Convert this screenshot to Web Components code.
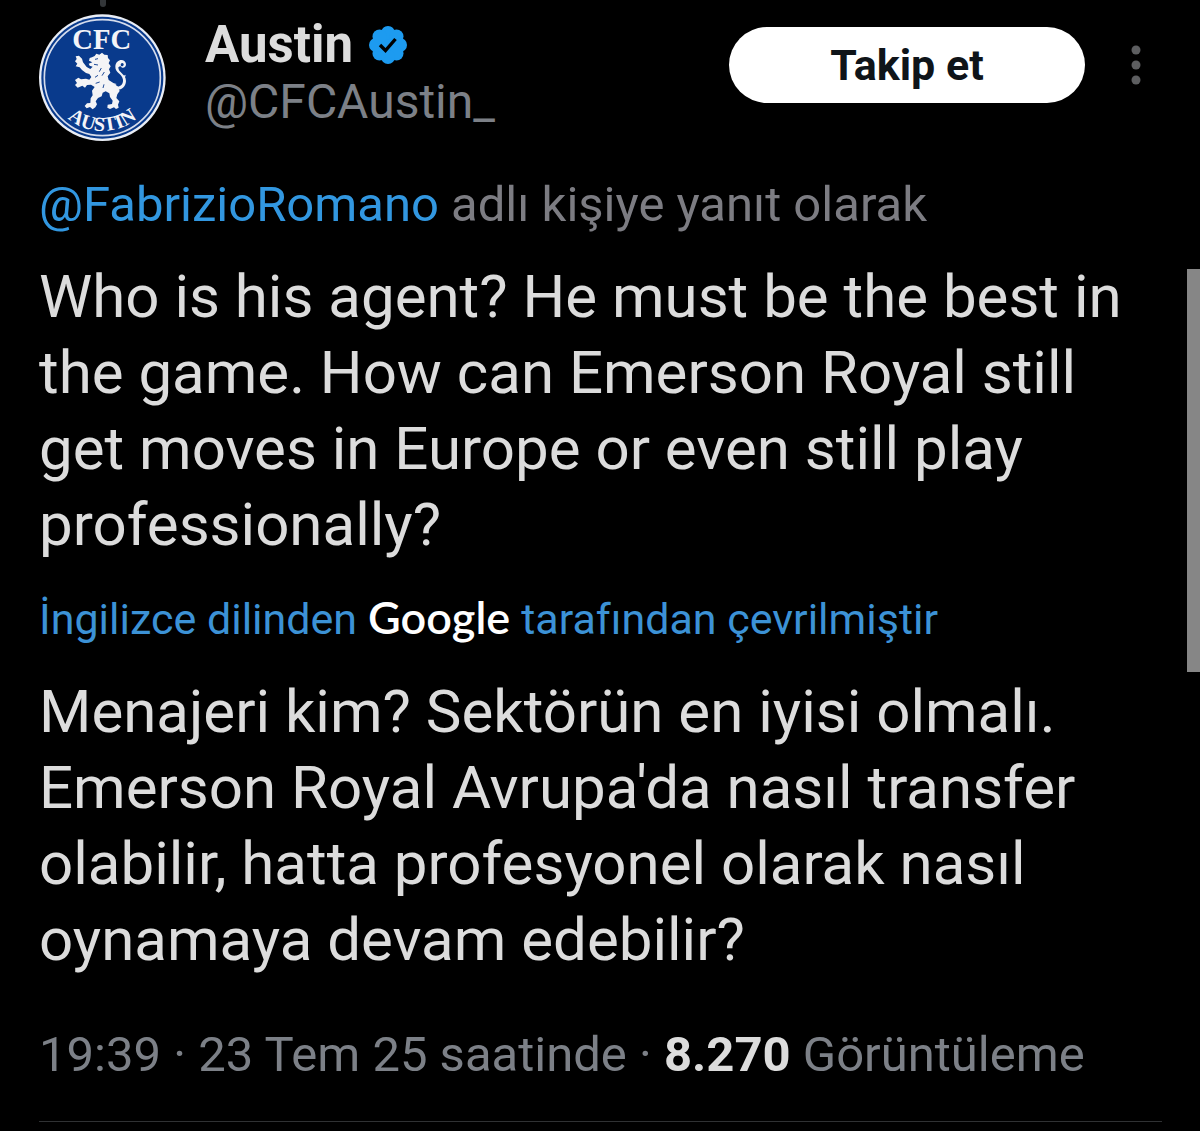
<!DOCTYPE html>
<html lang="tr">
<head>
<meta charset="utf-8">
<meta name="viewport" content="width=device-width, initial-scale=1">
<title>Austin (@CFCAustin_)</title>
<style>
  body {
    margin: 0;
    background: #000;
    color: #dcdcdc;
    font-family: Roboto, "Liberation Sans", sans-serif;
  }
</style>
</head>
<body>
<post-view>
  <post-header slot="header" name="Austin" handle="@CFCAustin_"></post-header>
  <reply-line slot="reply" user="@FabrizioRomano">adlı kişiye yanıt olarak</reply-line>
  <post-text lang="en">Who is his agent? He must be the best in the game. How can Emerson Royal still get moves in Europe or even still play professionally?</post-text>
  <translate-note></translate-note>
  <post-text>Menajeri kim? Sektörün en iyisi olmalı. Emerson Royal Avrupa'da nasıl transfer olabilir, hatta profesyonel olarak nasıl oynamaya devam edebilir?</post-text>
  <post-meta slot="meta" time="19:39" date="23 Tem 25 saatinde" views="8.270"></post-meta>
</post-view>
<scroll-thumb></scroll-thumb>

<script>
class PostElement extends HTMLElement {
  constructor() {
    super();
    this.attachShadow({ mode: "open" });
  }

  connectedCallback() {
    this.shadowRoot.innerHTML = `<style>${this.styles}</style>${this.markup}`;
  }
}

class PostView extends PostElement {
  get styles() {
    return `
      :host { display: block; }
      article {
        display: flex;
        flex-direction: column;
        padding: 0 38px 0 39px;
      }
      .content {
        display: flex;
        flex-direction: column;
        gap: 26px;
        padding: 26px 0 48px;
      }
    `;
  }

  get markup() {
    return `
      <article>
        <slot name="header"></slot>
        <slot name="reply"></slot>
        <div class="content"><slot></slot></div>
        <slot name="meta"></slot>
      </article>
    `;
  }
}

class UserAvatar extends PostElement {
  get styles() {
    return `
      :host {
        display: flex;
        flex-direction: column;
        align-items: center;
        gap: 7px;
      }
      .thread {
        width: 6px;
        height: 7px;
        border-radius: 0 0 3px 3px;
        background: #333639;
      }
      svg { display: block; width: 128px; height: 128px; }
      text {
        font-family: "Liberation Serif", serif;
        font-weight: 700;
        fill: #f3f4f8;
      }
    `;
  }

  get markup() {
    return `
      <div class="thread"></div>
      <svg viewBox="58 42 384 384" role="img" aria-label="CFC Austin">
        <circle cx="248" cy="233" r="190" fill="#e9edf5"/>
        <circle cx="248" cy="233" r="183" fill="#093a8c"/>
        <circle cx="248" cy="233" r="174" fill="none" stroke="#d5dcec" stroke-width="5"/>
        <text x="246" y="148" font-size="86" text-anchor="middle">CFC</text>
        <path id="arc" d="M88 233A160 160 0 0 0 408 233" fill="none"/>
        <text font-size="60" text-anchor="middle">
          <textPath href="#arc" startOffset="50%">AUSTIN</textPath>
        </text>
        <g fill="#f4f4f6">
          <path d="M217 172L225 168L230 161L239 164L247 158L254 164L264 165L265 174L271 181L267 190L273 199L268 208L272 218L264 229L267 240L281 249L295 260L300 273L293 283L290 294L299 304L295 314L297 323L289 327L283 322L271 327L263 323L264 314L277 312L279 302L271 291L269 280L258 274L249 278L246 289L235 294L228 304L232 313L227 322L219 328L211 321L201 325L195 318L202 310L212 309L213 295L219 286L217 272L225 261L214 254L202 255L196 263L188 257L174 263L166 255L172 249L166 240L176 233L184 238L199 236L209 239L215 231L209 222L199 219L187 210L180 202L168 199L173 191L166 184L171 177L168 169L178 167L187 176L190 187L201 201L212 207L219 200L210 197L207 191L218 187L208 182L210 174Z"/>
          <path d="M278 250C290 267 312 259 310 239C308 220 286 219 287 200C288 177 316 174 319 192C320 203 307 208 302 198L296 202C295 218 319 222 319 243C318 269 290 277 276 261Z"/>
          <path d="M309 229L318 224L315 237ZM286 255L279 249L291 252Z"/>
        </g>
        <path d="M304 198C300 190 309 185 312 192C313 197 307 201 304 198Z" fill="#093a8c"/>
        <g fill="none" stroke="#204b98" stroke-width="3">
          <path d="M226 178L235 176M223 193L235 195M245 204L239 215M254 216L247 227M235 226L226 232M228 250L240 246M253 253L250 264"/>
        </g>
      </svg>
    `;
  }
}

class VerifiedBadge extends PostElement {
  get styles() {
    return `
      :host { display: block; }
      svg { display: block; width: 38px; height: 38px; }
    `;
  }

  get markup() {
    return `
      <svg viewBox="0 0 38 38" role="img" aria-label="Onaylı hesap">
        <g fill="#1d9bf0">
          <circle cx="19" cy="19" r="15"/>
          <circle cx="19" cy="7" r="7"/>
          <circle cx="27.5" cy="10.5" r="7"/>
          <circle cx="31" cy="19" r="7"/>
          <circle cx="27.5" cy="27.5" r="7"/>
          <circle cx="19" cy="31" r="7"/>
          <circle cx="10.5" cy="27.5" r="7"/>
          <circle cx="7" cy="19" r="7"/>
          <circle cx="10.5" cy="10.5" r="7"/>
        </g>
        <path d="M11 19L16.5 24.5L26.5 13" fill="none" stroke="#000" stroke-width="3.4"/>
      </svg>
    `;
  }
}

class PostHeader extends PostElement {
  get styles() {
    return `
      :host { display: flex; align-items: flex-start; }
      .who {
        flex: 1;
        margin-left: 38px;
        padding-top: 16px;
        font-size: 48px;
        line-height: 57px;
      }
      .name {
        display: flex;
        align-items: center;
        gap: 16px;
        font-size: 51px;
        font-weight: 700;
      }
      .handle { color: #7c8087; }
      a { color: inherit; text-decoration: none; }
      .actions {
        display: flex;
        align-items: center;
        gap: 41px;
        padding-top: 27px;
      }
      button {
        border: 0;
        padding: 0;
        font: inherit;
        cursor: pointer;
      }
      .follow {
        width: 356px;
        height: 76px;
        border-radius: 38px;
        background: #fff;
        color: #0f1419;
        font-size: 43px;
        font-weight: 700;
      }
      .more { margin-right: 16px; background: none; }
      .more svg { display: block; width: 20px; height: 40px; }
    `;
  }

  get markup() {
    return `
      <user-avatar></user-avatar>
      <div class="who">
        <div class="name"><a href="#">${this.getAttribute("name")}</a><verified-badge></verified-badge></div>
        <a class="handle" href="#">${this.getAttribute("handle")}</a>
      </div>
      <div class="actions">
        <button class="follow" type="button">Takip et</button>
        <button class="more" type="button" aria-label="Diğer seçenekler">
          <svg viewBox="0 0 20 40" fill="#5d5e60">
            <circle cx="10" cy="5" r="4.5"/>
            <circle cx="10" cy="20" r="4.5"/>
            <circle cx="10" cy="35" r="4.5"/>
          </svg>
        </button>
      </div>
    `;
  }
}

class ReplyLine extends PostElement {
  get styles() {
    return `
      :host {
        display: block;
        padding-top: 34px;
        color: #7c7c82;
        font-size: 49px;
        line-height: 57px;
      }
      a { color: #3297e0; text-decoration: none; }
    `;
  }

  get markup() {
    return `<a href="#">${this.getAttribute("user")}</a> <slot></slot>`;
  }
}

class PostText extends PostElement {
  get styles() {
    return `
      :host {
        display: block;
        font-size: 60px;
        line-height: 76px;
      }
    `;
  }

  get markup() {
    return `<slot></slot>`;
  }
}

class TranslateNote extends PostElement {
  get styles() {
    return `
      :host { display: block; font-size: 43px; line-height: 57px; }
      a {
        display: flex;
        align-items: baseline;
        gap: 11px;
        color: #3c92d6;
        text-decoration: none;
      }
      .google {
        color: #fff;
        font-family: Lato, "Liberation Sans", sans-serif;
        font-size: 45px;
        font-weight: 600;
      }
    `;
  }

  get markup() {
    return `
      <a href="#">
        <span>İngilizce dilinden</span>
        <span class="google">Google</span>
        <span>tarafından çevrilmiştir</span>
      </a>
    `;
  }
}

class PostMeta extends PostElement {
  get styles() {
    return `
      :host {
        display: block;
        padding-bottom: 38px;
        border-bottom: 1px solid #2f3133;
        color: #7c8087;
        font-size: 49px;
        line-height: 57px;
      }
      b { color: #dcdcdc; }
    `;
  }

  get markup() {
    return `<time>${this.getAttribute("time")} · ${this.getAttribute("date")}</time> · <b>${this.getAttribute("views")}</b> Görüntüleme`;
  }
}

class ScrollThumb extends PostElement {
  get styles() {
    return `
      :host {
        position: fixed;
        top: 269px;
        right: 0;
        width: 13px;
        height: 403px;
        background: #868686;
      }
    `;
  }

  get markup() {
    return "";
  }
}

customElements.define("user-avatar", UserAvatar);
customElements.define("verified-badge", VerifiedBadge);
customElements.define("post-header", PostHeader);
customElements.define("reply-line", ReplyLine);
customElements.define("post-text", PostText);
customElements.define("translate-note", TranslateNote);
customElements.define("post-meta", PostMeta);
customElements.define("scroll-thumb", ScrollThumb);
customElements.define("post-view", PostView);
</script>
</body>
</html>
